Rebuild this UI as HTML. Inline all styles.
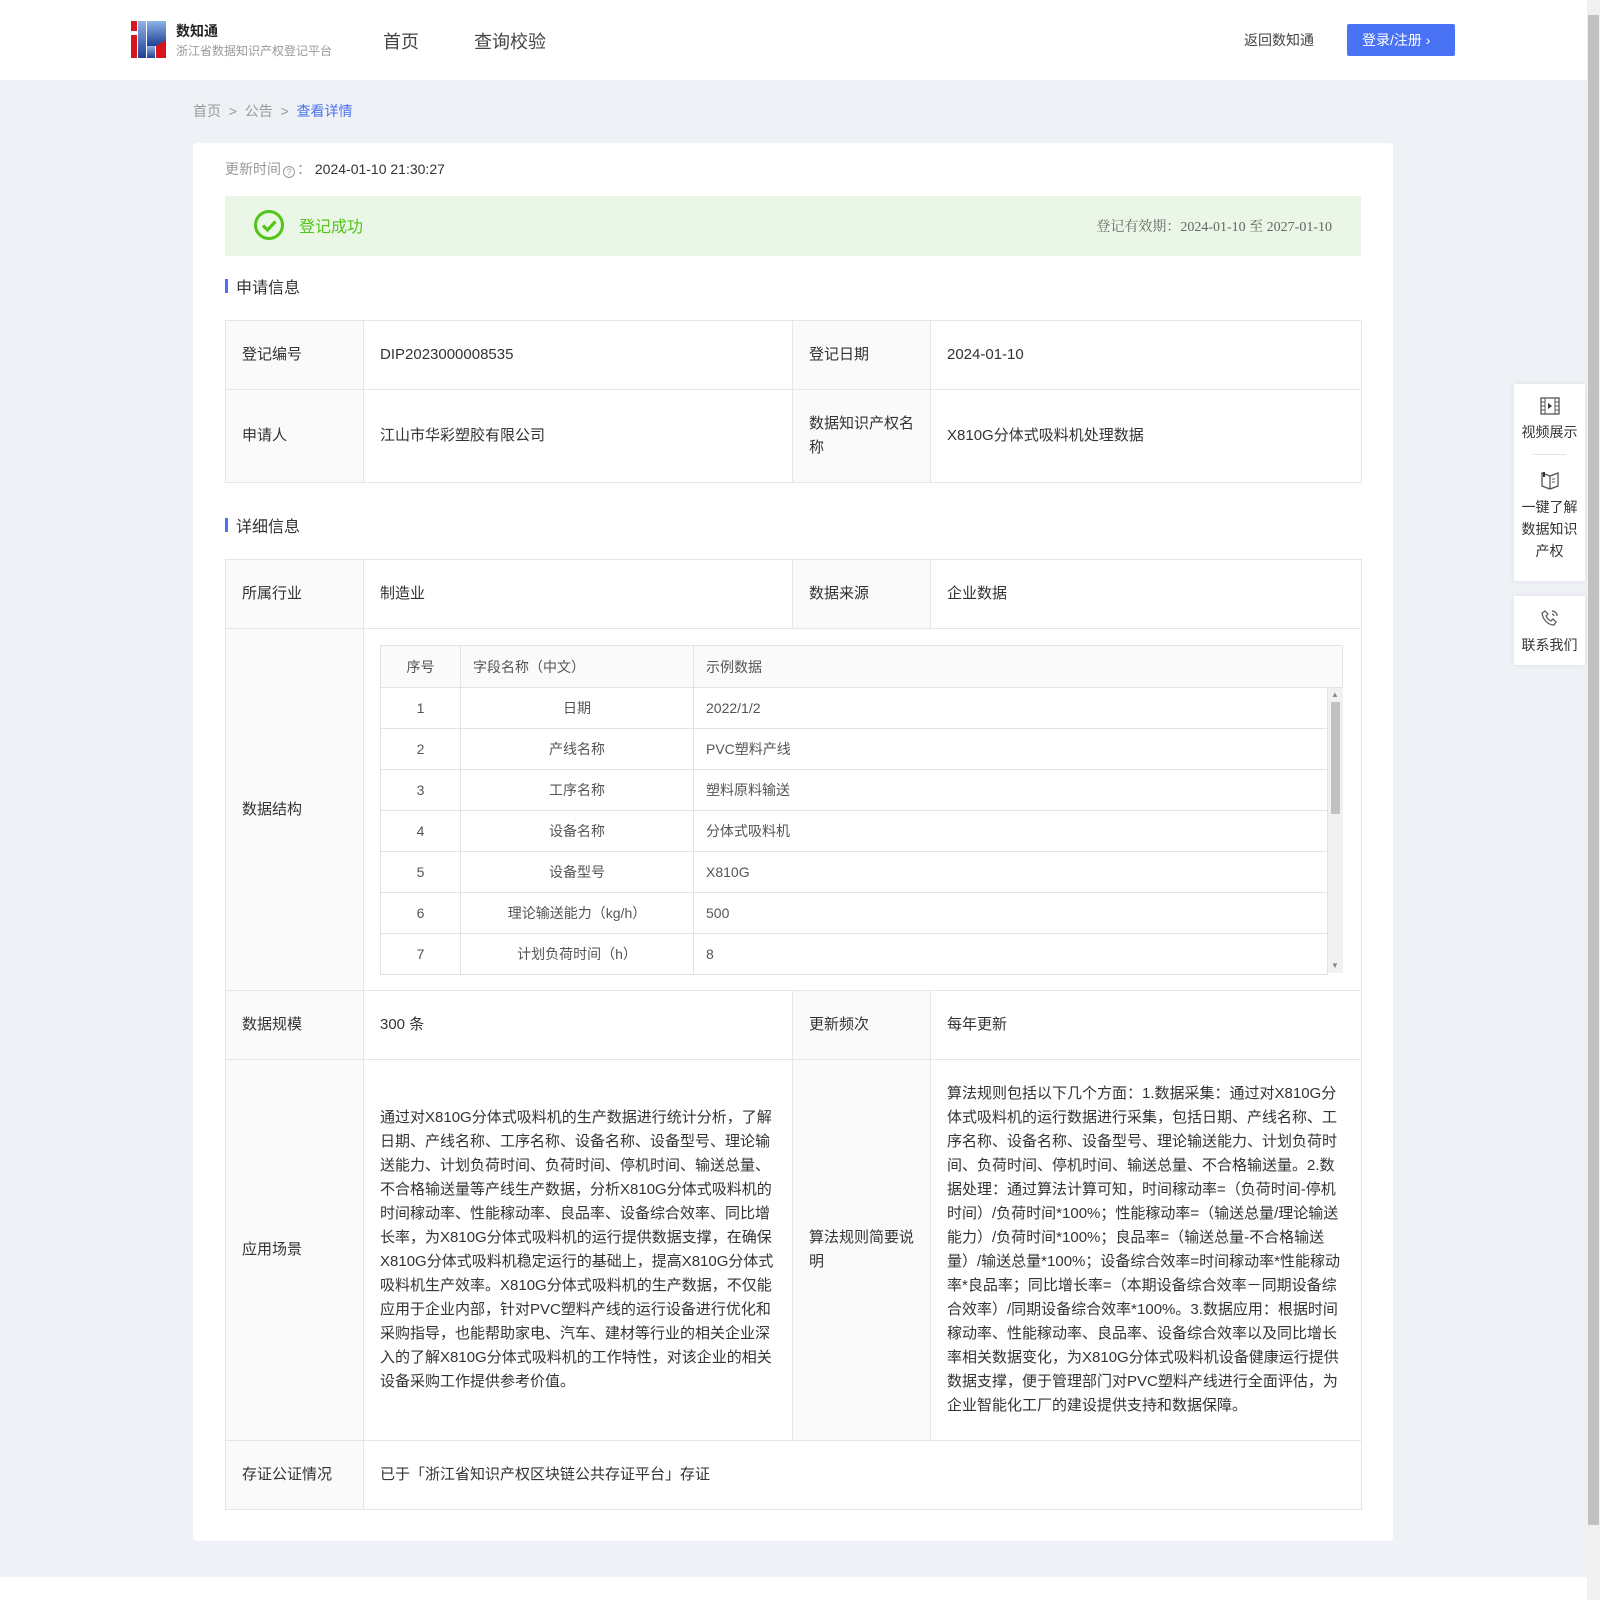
<!DOCTYPE html>
<html><head><meta charset="utf-8"><style>
*{margin:0;padding:0;box-sizing:border-box}
html,body{width:1600px;height:1600px;overflow:hidden}
body{background:#fff;font-family:"Liberation Sans","Noto Sans CJK SC",sans-serif;color:#333;font-size:15px;position:relative}
.abs{position:absolute}
#bg{left:0;top:80px;width:1587px;height:1497px;background:#eef1f5}
#hdr{left:0;top:0;width:1587px;height:80px;background:#fff}
.card{left:193px;top:143px;width:1200px;height:1398px;background:#fff;border-radius:4px}
table{border-collapse:collapse;table-layout:fixed}
.t td{border:1px solid #e6e6e6;padding:0 16px;vertical-align:middle;line-height:24px}
.t td.l{background:#fafafa}
.it td{border:1px solid #e3e3e3;height:41px;font-size:14px;color:#555}
.it tr.h td{background:#fafafa;height:42px}
.ln{white-space:nowrap}
.sec{font-size:16px;color:#333}
.sec:before{content:"";position:absolute;left:0;top:5px;width:3px;height:14px;background:#4a72f5}
</style></head><body>
<div id="hdr" class="abs"></div>
<div id="bg" class="abs"></div>
<svg class="abs" style="left:131px;top:21px" width="35" height="37" viewBox="0 0 35 37">
<defs><linearGradient id="g" x1="0" y1="0" x2="0" y2="1"><stop offset="0" stop-color="#8fb4e6"/><stop offset="1" stop-color="#1f3f96"/></linearGradient></defs>
<rect x="0" y="0" width="6" height="10" fill="#d8141c"/><rect x="0" y="14" width="6" height="23" fill="#d8141c"/>
<rect x="7" y="0" width="8" height="37" fill="url(#g)"/><rect x="16" y="0" width="19" height="25" fill="url(#g)"/>
<rect x="16" y="25" width="8" height="12" fill="url(#g)"/><polygon points="25,25 35,19 35,37 25,37" fill="#d8141c"/>
</svg>
<div class="abs" style="left:176px;top:21px;font-size:14px;font-weight:bold;color:#222">数知通</div>
<div class="abs" style="left:176px;top:42px;font-size:12px;color:#999">浙江省数据知识产权登记平台</div>
<div class="abs" style="left:383px;top:28px;font-size:18px;color:#444">首页</div>
<div class="abs" style="left:474px;top:28px;font-size:18px;color:#444">查询校验</div>
<div class="abs" style="left:1244px;top:30px;font-size:14px;color:#444">返回数知通</div>
<div class="abs" style="left:1347px;top:24px;width:108px;height:32px;background:#4a72f5;border-radius:2px;color:#fff;font-size:14px;line-height:32px;padding-left:15px">登录/注册 ›</div>
<div class="abs" style="left:193px;top:101px;font-size:14px;color:#999">首页 &nbsp;&gt;&nbsp; 公告 &nbsp;&gt;&nbsp; <span style="color:#4a72f5">查看详情</span></div>
<div class="abs card"></div>
<div class="abs" style="left:225px;top:159px;font-size:14px;color:#999">更新时间<span style="display:inline-block;width:12px;height:12px;border:1px solid #999;border-radius:50%;font-size:9px;line-height:10px;text-align:center;vertical-align:-1px;margin:0 2px">?</span>： <span style="color:#333">2024-01-10 21:30:27</span></div>
<div class="abs" style="left:225px;top:196px;width:1136px;height:60px;background:#ebf7e6"></div>
<div class="abs" style="left:254px;top:210px;width:30px;height:30px;border:3px solid #52c41a;border-radius:50%"></div>
<svg class="abs" style="left:254px;top:210px" width="30" height="30"><path d="M9 15.5l4.5 4.5 8-8.5" fill="none" stroke="#52c41a" stroke-width="3.2"/></svg>
<div class="abs" style="left:299px;top:213px;font-size:16px;color:#52c41a">登记成功</div>
<div class="abs" style="right:268px;top:216px;font-size:14px;color:#666;font-family:'Liberation Serif','Noto Serif CJK SC',serif">登记有效期：2024-01-10 至 2027-01-10</div>
<div class="abs sec" style="left:225px;top:274px;padding-left:11px">申请信息</div>
<table class="abs t" style="left:225px;top:320px;width:1137px">
<colgroup><col style="width:138px"><col style="width:429px"><col style="width:138px"><col></colgroup>
<tr style="height:69px"><td class="l">登记编号</td><td>DIP2023000008535</td><td class="l">登记日期</td><td>2024-01-10</td></tr>
<tr style="height:93px"><td class="l">申请人</td><td>江山市华彩塑胶有限公司</td><td class="l">数据知识产权名称</td><td>X810G分体式吸料机处理数据</td></tr>
</table>
<div class="abs sec" style="left:225px;top:513px;padding-left:11px">详细信息</div>
<table class="abs t" style="left:225px;top:559px;width:1137px">
<colgroup><col style="width:138px"><col style="width:429px"><col style="width:138px"><col></colgroup>
<tr style="height:69px"><td class="l">所属行业</td><td>制造业</td><td class="l">数据来源</td><td>企业数据</td></tr>
<tr style="height:362px"><td class="l">数据结构</td><td colspan="3"></td></tr>
<tr style="height:69px"><td class="l">数据规模</td><td>300 条</td><td class="l">更新频次</td><td>每年更新</td></tr>
<tr style="height:381px"><td class="l">应用场景</td><td><div class="ln">通过对X810G分体式吸料机的生产数据进行统计分析，了解</div><div class="ln">日期、产线名称、工序名称、设备名称、设备型号、理论输</div><div class="ln">送能力、计划负荷时间、负荷时间、停机时间、输送总量、</div><div class="ln">不合格输送量等产线生产数据，分析X810G分体式吸料机的</div><div class="ln">时间稼动率、性能稼动率、良品率、设备综合效率、同比增</div><div class="ln">长率，为X810G分体式吸料机的运行提供数据支撑，在确保</div><div class="ln">X810G分体式吸料机稳定运行的基础上，提高X810G分体式</div><div class="ln">吸料机生产效率。X810G分体式吸料机的生产数据，不仅能</div><div class="ln">应用于企业内部，针对PVC塑料产线的运行设备进行优化和</div><div class="ln">采购指导，也能帮助家电、汽车、建材等行业的相关企业深</div><div class="ln">入的了解X810G分体式吸料机的工作特性，对该企业的相关</div><div class="ln">设备采购工作提供参考价值。</div></td><td class="l">算法规则简要说明</td><td><div class="ln">算法规则包括以下几个方面：1.数据采集：通过对X810G分</div><div class="ln">体式吸料机的运行数据进行采集，包括日期、产线名称、工</div><div class="ln">序名称、设备名称、设备型号、理论输送能力、计划负荷时</div><div class="ln">间、负荷时间、停机时间、输送总量、不合格输送量。2.数</div><div class="ln">据处理：通过算法计算可知，时间稼动率=（负荷时间-停机</div><div class="ln">时间）/负荷时间*100%；性能稼动率=（输送总量/理论输送</div><div class="ln">能力）/负荷时间*100%；良品率=（输送总量-不合格输送</div><div class="ln">量）/输送总量*100%；设备综合效率=时间稼动率*性能稼动</div><div class="ln">率*良品率；同比增长率=（本期设备综合效率－同期设备综</div><div class="ln">合效率）/同期设备综合效率*100%。3.数据应用：根据时间</div><div class="ln">稼动率、性能稼动率、良品率、设备综合效率以及同比增长</div><div class="ln">率相关数据变化，为X810G分体式吸料机设备健康运行提供</div><div class="ln">数据支撑，便于管理部门对PVC塑料产线进行全面评估，为</div><div class="ln">企业智能化工厂的建设提供支持和数据保障。</div></td></tr>
<tr style="height:69px"><td class="l">存证公证情况</td><td colspan="3">已于「浙江省知识产权区块链公共存证平台」存证</td></tr>
</table>
<table class="abs it" style="left:380px;top:645px;width:948px">
<colgroup><col style="width:80px"><col style="width:233px"><col></colgroup>
<tr class="h"><td style="text-align:center">序号</td><td style="padding-left:12px">字段名称（中文）</td><td style="padding-left:12px">示例数据</td></tr>
<tr><td align="center">1</td><td align="center">日期</td><td style="padding-left:12px">2022/1/2</td></tr>
<tr><td align="center">2</td><td align="center">产线名称</td><td style="padding-left:12px">PVC塑料产线</td></tr>
<tr><td align="center">3</td><td align="center">工序名称</td><td style="padding-left:12px">塑料原料输送</td></tr>
<tr><td align="center">4</td><td align="center">设备名称</td><td style="padding-left:12px">分体式吸料机</td></tr>
<tr><td align="center">5</td><td align="center">设备型号</td><td style="padding-left:12px">X810G</td></tr>
<tr><td align="center">6</td><td align="center">理论输送能力（kg/h）</td><td style="padding-left:12px">500</td></tr>
<tr><td align="center">7</td><td align="center">计划负荷时间（h）</td><td style="padding-left:12px">8</td></tr>
</table>
<div class="abs" style="left:1326px;top:645px;width:17px;height:43px;background:#fafafa;border:1px solid #e3e3e3;border-left:0"></div>
<div class="abs" style="left:1328px;top:688px;width:15px;height:285px;background:#f1f1f1"></div>
<div class="abs" style="left:1331px;top:702px;width:9px;height:112px;background:#c1c1c1"></div>
<div class="abs" style="left:1331px;top:690px;font-size:8px;color:#888">▲</div>
<div class="abs" style="left:1331px;top:961px;font-size:8px;color:#888">▼</div>
<div class="abs" style="left:1514px;top:384px;width:71px;height:197px;background:#fff;box-shadow:0 0 6px rgba(0,0,0,.08);text-align:center;font-size:14px;color:#333;line-height:22px">
<svg width="20" height="18" style="margin-top:13px" viewBox="0 0 20 18"><rect x="1" y="1" width="18" height="16" fill="none" stroke="#555" stroke-width="1.3"/><path d="M5 1v16M15 1v16M1 5h4M1 9h4M1 13h4M15 5h4M15 9h4M15 13h4" stroke="#555" stroke-width="1"/><path d="M8 6l4 3-4 3z" fill="#333"/></svg>
<div>视频展示</div>
<div style="width:33px;height:1px;background:#e5e5e5;margin:11px auto 15px"></div>
<svg width="20" height="20" viewBox="0 0 20 20"><path d="M2 3l8 3 8-3v13l-8 3-8-3z M10 6v13" fill="none" stroke="#555" stroke-width="1.3"/><path d="M4 2v5" stroke="#333" stroke-width="2"/><path d="M12 9h3M12 12h3" stroke="#555"/></svg>
<div>一键了解<br>数据知识<br>产权</div></div>
<div class="abs" style="left:1514px;top:596px;width:71px;height:69px;background:#fff;box-shadow:0 0 6px rgba(0,0,0,.08);text-align:center;font-size:14px;color:#333;line-height:22px">
<svg width="20" height="20" style="margin-top:12px" viewBox="0 0 20 20"><path d="M5 3l3 3-2 2c1 2 3 4 5 5l2-2 3 3-2 3C8 17 3 12 2 5z" fill="none" stroke="#555" stroke-width="1.2"/><path d="M12 3a5 5 0 0 1 5 5M12 6a2 2 0 0 1 2 2" fill="none" stroke="#555" stroke-width="1.2"/></svg>
<div>联系我们</div></div>
<div class="abs" style="left:1587px;top:0;width:13px;height:1600px;background:#f1f1f1"></div>
<div class="abs" style="left:1588px;top:15px;width:11px;height:1510px;background:#c1c1c1"></div>
</body></html>
